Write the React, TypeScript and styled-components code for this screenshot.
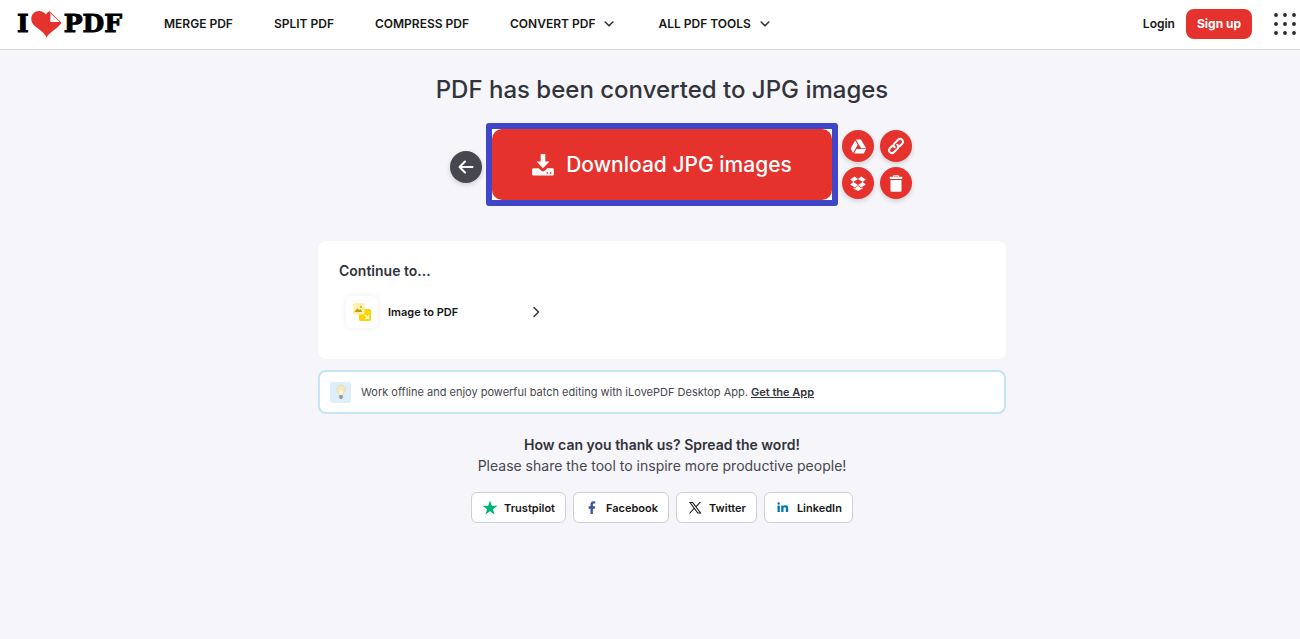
import React from "react";
import styled, { createGlobalStyle } from "styled-components";

const GlobalStyle = createGlobalStyle`
  *, *::before, *::after { box-sizing: border-box; }
  body {
    margin: 0;
    background: #f5f5fa;
    color: #161616;
    font-family: Inter, "Liberation Sans", sans-serif;
  }
  button { font: inherit; color: inherit; border: 0; cursor: pointer; }
  a { color: inherit; text-decoration: none; }
  svg { display: block; flex: none; }
`;

const Header = styled.header`
  display: flex;
  align-items: center;
  height: 50px;
  padding: 0 4px 2px 17px;
  background: #fff;
  border-bottom: 1px solid #d6d6e0;
`;

const Logo = styled.a`
  display: flex;
  align-items: center;
  gap: 2px;
  width: 147px;
  color: #000;
  font: bold 25px/32px "DejaVu Serif", serif;
  -webkit-text-stroke: 1px #000;
`;

const Nav = styled.nav`
  display: flex;
  align-items: center;
  gap: 41px;
  flex: 1;
`;

const NavLink = styled.a`
  font-size: 12px;
  line-height: 20px;
  font-weight: 600;
`;

const NavMenu = styled.button`
  display: flex;
  align-items: center;
  gap: 8px;
  padding: 0;
  background: none;
  font-size: 12px;
  line-height: 20px;
  font-weight: 600;
`;

const Account = styled.div`
  display: flex;
  align-items: center;
  gap: 11px;
`;

const LoginLink = styled.a`
  font-size: 12px;
  line-height: 20px;
  font-weight: 600;
`;

const SignUp = styled.a`
  padding: 5px 11px;
  border-radius: 8px;
  background: #e5322d;
  color: #fff;
  font-size: 12px;
  line-height: 20px;
  font-weight: 700;
`;

const AppsButton = styled.button`
  margin-left: 11px;
  padding: 0;
  background: none;
`;

const Main = styled.main`
  display: flex;
  flex-direction: column;
  align-items: center;
  padding: 24px 0 32px 24px;
`;

const Title = styled.h1`
  margin: 0 0 17px;
  color: #33333b;
  font-size: 24px;
  line-height: 32px;
  font-weight: 500;
`;

const Actions = styled.div`
  display: grid;
  grid-template-columns: 1fr auto 1fr;
  align-items: center;
  gap: 4px;
  width: 100%;
  margin-bottom: 35px;
`;

const Circle = styled.button<{ $tone: string }>`
  display: grid;
  place-items: center;
  width: 32px;
  height: 32px;
  padding: 0;
  border-radius: 50%;
  background: ${(p) => p.$tone};
  color: #fff;
  box-shadow: 0 2px 5px rgba(0, 0, 0, 0.16);
`;

const BackSlot = styled.div`
  display: flex;
  justify-content: flex-end;
  padding-top: 4px;
`;

const Frame = styled.div`
  border: 6px solid #4046c8;
  border-radius: 3px;
  background: #fff;
`;

const Download = styled.button`
  display: flex;
  align-items: center;
  justify-content: center;
  gap: 12px;
  width: 340px;
  height: 71px;
  padding: 0;
  border-radius: 10px;
  background: #e5322d;
  color: #fff;
  font-size: 21px;
  line-height: 32px;
  font-weight: 500;
`;

const SaveOptions = styled.div`
  display: grid;
  grid-template-columns: repeat(2, 32px);
  gap: 5px 6px;
`;

const Column = styled.div`
  display: flex;
  flex-direction: column;
  gap: 11px;
  width: 100%;
  max-width: 688px;
`;

const Card = styled.section`
  padding: 20px 21px 31px;
  border-radius: 8px;
  background: #fff;
`;

const CardTitle = styled.h2`
  margin: 0 0 15px;
  color: #33333b;
  font-size: 14px;
  line-height: 20px;
  font-weight: 600;
`;

const Tool = styled.a`
  display: flex;
  align-items: center;
  gap: 10px;
  width: 208px;
  padding-left: 7px;
  font-size: 11px;
  line-height: 16px;
  font-weight: 600;

  span { flex: 1; }
`;

const ToolIcon = styled.i`
  display: grid;
  place-items: center;
  width: 32px;
  height: 32px;
  border-radius: 6px;
  background: #fff;
  box-shadow: 0 0 6px rgba(0, 0, 0, 0.08);
`;

const Tip = styled.aside`
  display: flex;
  align-items: center;
  gap: 10px;
  height: 44px;
  padding: 0 10px;
  border: 2px solid #c2e3f8;
  border-radius: 8px;
  background: #fff;
  color: #47474f;
  font-size: 11px;
  line-height: 16px;

  a { color: #33333b; font-weight: 600; text-decoration: underline; }
`;

const TipIcon = styled.i`
  display: grid;
  place-items: center;
  width: 21px;
  height: 21px;
  border-radius: 3px;
  background: #dceffb;
`;

const Share = styled.section`
  margin-top: 20px;
  text-align: center;
`;

const ShareTitle = styled.h2`
  margin: 0;
  color: #33333b;
  font-size: 14px;
  line-height: 21px;
  font-weight: 600;
`;

const ShareText = styled.p`
  margin: 0 0 16px;
  color: #47474f;
  font-size: 14px;
  line-height: 21px;
`;

const ShareList = styled.div`
  display: flex;
  justify-content: center;
  gap: 7px;
`;

const ShareLink = styled.a`
  display: flex;
  align-items: center;
  gap: 6px;
  height: 31px;
  padding: 0 10px;
  border: 1px solid #cfcfd8;
  border-radius: 6px;
  background: #fff;
  font-size: 11px;
  line-height: 16px;
  font-weight: 600;
`;

const Heart = () => (
  <svg width="31" height="28" viewBox="0 0 31 28" aria-hidden="true">
    <path
      fill="#e5322d"
      d="M15.500 27.500C14 23.500 9.500 20.500 5 17 1.500 14.300.3 11.800.3 8.800.3 4.300 3.800 1 8 1c3 0 5.400 1.200 6.800 3.600C15.700 3 17 1.800 18.600 1.200L30.500 12.800C29 15.500 26.500 17.200 24 19.200c-3.600 2.900-7 5-8.500 8.300z"
    />
    <path fill="#fff" d="M19.300 2.900v9.200h9.400z" />
  </svg>
);

const Chevron = () => (
  <svg width="14" height="6" viewBox="-1 0 14 6" fill="none" stroke="#33333b" strokeWidth="1.600" strokeLinecap="round" strokeLinejoin="round" aria-hidden="true">
    <path d="M1.200 1 5 4.800 8.800 1" />
  </svg>
);

const DownloadIcon = () => (
  <svg width="22" height="22" viewBox="0 0 22 22" fill="#fff" aria-hidden="true">
    <path d="M8.700 0h4.600v7.500h4.200L11 14.200 4.500 7.500h4.200z" />
    <path fillRule="evenodd" d="M1.300 14.200h5.400l2.300 2.300q2 1.700 4 0l2.300-2.300h5.400q1.200 0 1.200 1.200v4.900q0 1.200-1.200 1.200H1.300q-1.200 0-1.200-1.200v-4.900q0-1.200 1.200-1.200zM14.500 18.200v1.500h1.600v-1.500zM17.700 18.200v1.500h1.600v-1.500z" />
  </svg>
);

const DriveIcon = () => (
  <svg width="17" height="15" viewBox="0 0 17 15" fill="#fff" aria-hidden="true">
    <path d="M5.900.4h5l5.200 8.900h-5z" />
    <path d="M5.200 1.400 7.700 5.800 3.100 14 .6 9.600z" />
    <path d="M6.500 10.100h9.700l-2.500 4.300H4.100z" />
  </svg>
);

const LinkIcon = () => (
  <svg width="18" height="18" viewBox="0 0 18 18" fill="none" stroke="#fff" strokeWidth="2" strokeLinecap="round" aria-hidden="true">
    <path d="M7.700 10.300c-1.300-1.200-1.300-2.700-.2-3.900l3.600-3.600c1.200-1.200 2.800-1.200 4-.1s1.200 2.800 0 4L12.600 9.200" />
    <path d="M10.300 7.700c1.300 1.200 1.300 2.700.2 3.900l-3.600 3.600c-1.200 1.200-2.800 1.200-4 .1s-1.200-2.800 0-4L5.400 8.800" />
  </svg>
);

const DropboxIcon = () => (
  <svg width="16" height="15" viewBox="0 0 16 15" fill="#fff" aria-hidden="true">
    <path d="M4.700.4 8 3.100 3.300 6 .2 3.500zM11.300.4 8 3.100 12.700 6l3.100-2.500zM.2 8.500 3.300 6 8 8.900l-3.300 2.700zM15.800 8.500 12.700 6 8 8.900l3.300 2.700zM8 9.800l3.300 2.700 1.400-.9v1L8 15l-4.700-2.400v-1l1.400.9z" />
  </svg>
);

const TrashIcon = () => (
  <svg width="14" height="17" viewBox="0 0 14 17" fill="#fff" aria-hidden="true">
    <path fillRule="evenodd" d="M4.200.2h5.600v1.600h3.400v2.200H.8V1.800h3.400zM5.200 1.200v.6h3.600v-.6z" />
    <path d="M1.500 5h11v10.800q0 1-1 1h-9q-1 0-1-1z" />
  </svg>
);

const ImageToPdfIcon = () => (
  <svg width="18" height="18" viewBox="0 0 18 18" aria-hidden="true">
    <rect x="6" y="6" width="12" height="12" rx="1.500" fill="#ffd500" />
    <rect width="11.500" height="11.500" rx="1.500" fill="#fff0ae" />
    <path d="m1.500 9 2.800-3.800L6 7.200 7.200 6l2.300 3z" fill="#c29f10" />
    <circle cx="8" cy="3.900" r=".9" fill="#c29f10" />
    <path d="m12 12 3.500 3.500m0-3.500v3.500H12" fill="none" stroke="#fff" strokeWidth="1.200" />
  </svg>
);

const BulbIcon = () => (
  <svg width="10" height="16" viewBox="0 0 10 16" aria-hidden="true">
    <path d="M5 1a4.200 4.200 0 0 0-4.200 4.300c0 2.300 1.900 3.300 2.200 6h4c.3-2.700 2.200-3.700 2.200-6A4.200 4.200 0 0 0 5 1z" fill="#f6e7bd" stroke="#d9d2bb" strokeWidth=".6" />
    <path d="M4 11V6.500L5 7.500l1-1V11" fill="none" stroke="#fffbe8" strokeWidth="1" />
    <path d="M3.200 11.300h3.600v2.300L5.800 15H4.200l-1-1.400z" fill="#8f969c" />
  </svg>
);

const networks = [
  {
    name: "Trustpilot",
    icon: <path fill="#00b67a" d="m9 1.500 1.800 5.300h5.700l-4.600 3.400 1.700 5.400L9 12.300l-4.600 3.300 1.700-5.400L1.500 6.800h5.700z" />,
  },
  {
    name: "Facebook",
    icon: <path fill="#3b5998" d="M7.500 15V9.700H5.600V7.200h1.900V5.500c0-2.200 1.200-3.200 3-3.200l1.800.1v2.200H11c-1 0-1.100.5-1.100 1.200v1.400h2.300l-.3 2.500h-2V15z" />,
  },
  {
    name: "Twitter",
    icon: (
      <path
        fill="#161616"
        fillRule="evenodd"
        d="M3 3h3.900l3.100 4.100L13.600 3h1.300l-4.300 4.900 4.900 6.600h-4L8.200 10l-4 4.500H2.900l4.700-5.300zM5 4l7 9.500h1.500L6.400 4z"
      />
    ),
  },
  {
    name: "LinkedIn",
    icon: (
      <path
        fill="#0077b5"
        d="M3.500 6.500h2.300V13H3.500zM4.650 3.200a1.250 1.250 0 1 1 0 2.500 1.250 1.250 0 0 1 0-2.500zM7.200 6.500h2.200v.9c.4-.7 1.200-1.100 2.100-1.100 2.200 0 2.700 1.400 2.700 3.200V13h-2.300V9.900c0-.8 0-1.700-1.100-1.700s-1.300.8-1.300 1.700V13H7.200z"
      />
    ),
  },
];

const appDots = [2, 11, 20];

export default function App() {
  return (
    <>
      <GlobalStyle />
      <Header>
        <Logo href="#" aria-label="I love PDF">
          <span>I</span>
          <Heart />
          <span>PDF</span>
        </Logo>
        <Nav>
          <NavLink href="#">MERGE PDF</NavLink>
          <NavLink href="#">SPLIT PDF</NavLink>
          <NavLink href="#">COMPRESS PDF</NavLink>
          <NavMenu>CONVERT PDF <Chevron /></NavMenu>
          <NavMenu>ALL PDF TOOLS <Chevron /></NavMenu>
        </Nav>
        <Account>
          <LoginLink href="#">Login</LoginLink>
          <SignUp href="#">Sign up</SignUp>
          <AppsButton aria-label="More products">
            <svg width="22" height="22" viewBox="0 0 22 22" fill="#26262c">
              {appDots.map((y) => appDots.map((x) => <circle key={`${x}-${y}`} cx={x} cy={y} r="1.900" />))}
            </svg>
          </AppsButton>
        </Account>
      </Header>
      <Main>
        <Title>PDF has been converted to JPG images</Title>
        <Actions>
          <BackSlot>
            <Circle $tone="#47474f" aria-label="Back">
              <svg width="16" height="14" viewBox="0 0 16 14" fill="none" stroke="#fff" strokeWidth="2" strokeLinecap="round" strokeLinejoin="round">
                <path d="M14.500 7H2M7 1.500 1.500 7 7 12.500" />
              </svg>
            </Circle>
          </BackSlot>
          <Frame>
            <Download>
              <DownloadIcon />
              Download JPG images
            </Download>
          </Frame>
          <SaveOptions>
            <Circle $tone="#e5322d" aria-label="Save to Google Drive"><DriveIcon /></Circle>
            <Circle $tone="#e5322d" aria-label="Copy link"><LinkIcon /></Circle>
            <Circle $tone="#e5322d" aria-label="Save to Dropbox"><DropboxIcon /></Circle>
            <Circle $tone="#e5322d" aria-label="Delete"><TrashIcon /></Circle>
          </SaveOptions>
        </Actions>
        <Column>
          <Card>
            <CardTitle>Continue to...</CardTitle>
            <Tool href="#">
              <ToolIcon><ImageToPdfIcon /></ToolIcon>
              <span>Image to PDF</span>
              <svg width="16" height="12" viewBox="0 0 16 12" fill="none" stroke="#33333b" strokeWidth="1.500" strokeLinecap="round" strokeLinejoin="round">
                <path d="m3 1.500 4.500 4.500L3 10.500" />
              </svg>
            </Tool>
          </Card>
          <Tip>
            <TipIcon><BulbIcon /></TipIcon>
            <span>
              Work offline and enjoy powerful batch editing with iLovePDF Desktop App. <a href="#">Get the App</a>
            </span>
          </Tip>
        </Column>
        <Share>
          <ShareTitle>How can you thank us? Spread the word!</ShareTitle>
          <ShareText>Please share the tool to inspire more productive people!</ShareText>
          <ShareList>
            {networks.map((n) => (
              <ShareLink key={n.name} href="#">
                <svg width="16" height="16" viewBox="1 1 16 16" aria-hidden="true">{n.icon}</svg>
                {n.name}
              </ShareLink>
            ))}
          </ShareList>
        </Share>
      </Main>
    </>
  );
}
